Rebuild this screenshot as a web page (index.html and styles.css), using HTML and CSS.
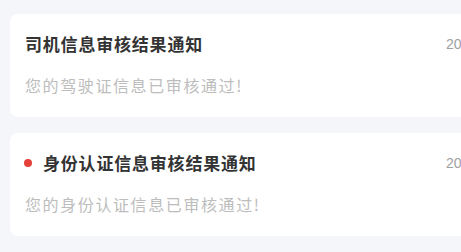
FILE: index.html
```html
<!DOCTYPE html>
<html lang="zh-CN">
<head>
<meta charset="utf-8">
<link rel="stylesheet" href="styles.css">
</head>
<body>
<div class="list">
  <div class="card">
    <div class="head">
      <div class="title">司机信息审核结果通知</div>
      <div class="date">2023-06-18 10:20</div>
    </div>
    <div class="desc">您的驾驶证信息已审核通过!</div>
  </div>
  <div class="card">
    <div class="head">
      <div class="title"><span class="dot"></span>身份认证信息审核结果通知</div>
      <div class="date">2023-06-18 10:20</div>
    </div>
    <div class="desc">您的身份认证信息已审核通过!</div>
  </div>
  <div class="card">
    <div class="head">
      <div class="title">车辆信息审核结果通知</div>
      <div class="date">2023-06-18 10:20</div>
    </div>
    <div class="desc">您的车辆信息已审核通过!</div>
  </div>
</div>
</body>
</html>
```

FILE: styles.css
```css
html, body {
  margin: 0;
  padding: 0;
  background: #f5f6f9;
  overflow: hidden;
  height: 252px;
}
body {
  font-family: "Noto Sans CJK SC", "Noto Sans", sans-serif;
}
.list {
  display: flex;
  flex-direction: column;
  gap: 16px;
  padding: 14px 0 0 10px;
}
.card {
  width: 561px;
  box-sizing: border-box;
  background: #fff;
  border-radius: 8px;
  padding: 18px 15px 20px 15px;
}
.head {
  display: flex;
  align-items: center;
  justify-content: space-between;
  height: 24px;
}
.title {
  display: flex;
  align-items: center;
  font-size: 17px;
  letter-spacing: 0.8px;
  font-weight: 700;
  color: #333;
  line-height: 24px;
}
.dot {
  width: 8px;
  height: 8px;
  border-radius: 50%;
  background: #e6403a;
  margin-right: 11px;
  margin-left: -1px;
}
.date {
  font-family: "Liberation Sans", Arial, sans-serif;
  font-size: 14px;
  color: #a0a0a0;
  width: 110px;
  white-space: nowrap;
}
.desc {
  margin-top: 17px;
  font-size: 16px;
  letter-spacing: 1.6px;
  line-height: 24px;
  color: #bdbdbd;
}
```
